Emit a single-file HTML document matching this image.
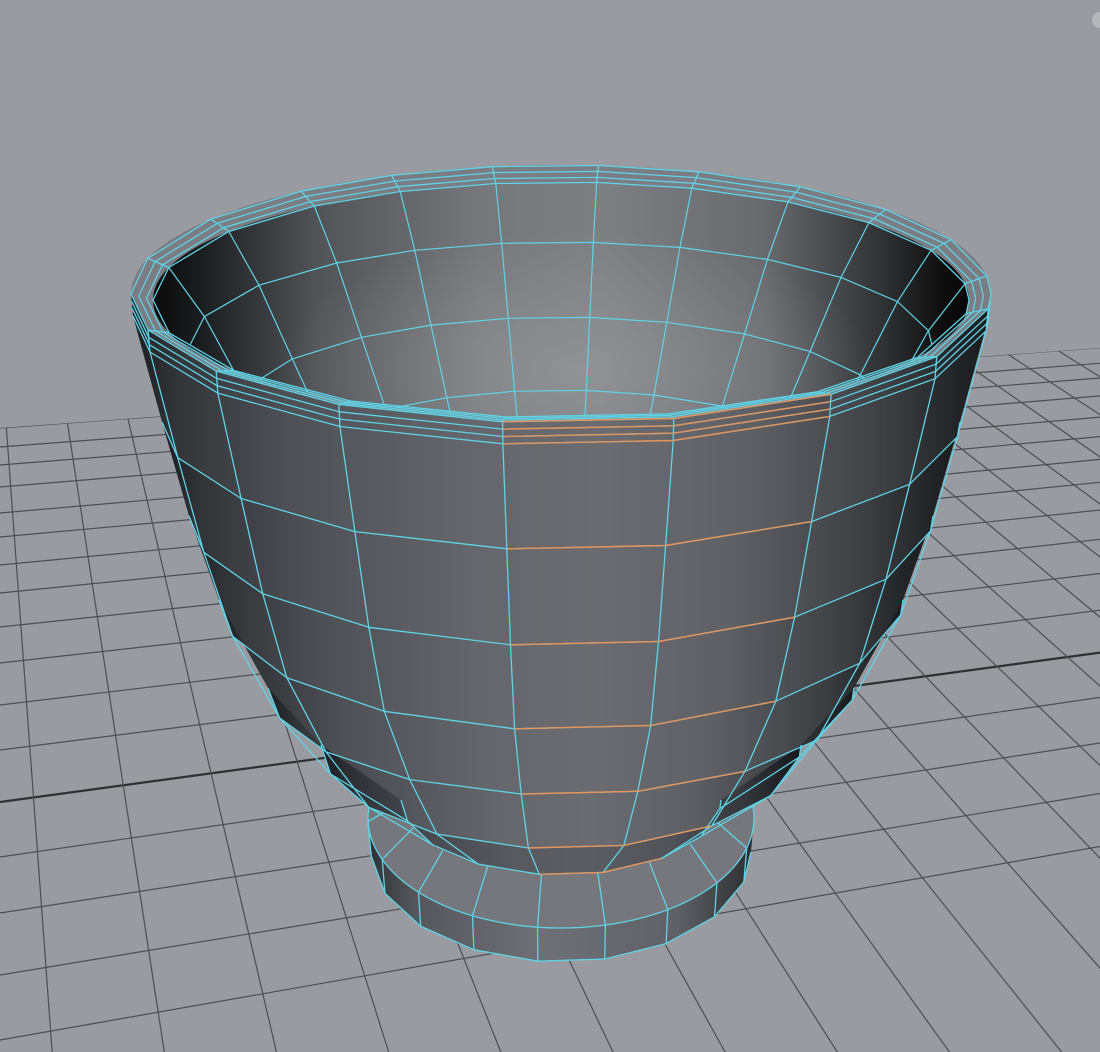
<!DOCTYPE html>
<html><head><meta charset="utf-8"><style>html,body{margin:0;padding:0;background:#9a9ba0;}svg{display:block}</style></head>
<body>
<svg id="s" width="1100" height="1052" viewBox="0 0 1100 1052" xmlns="http://www.w3.org/2000/svg"></svg>
<script>
var D=Math.PI/180;
function R(cx,cy,rx,ry){return {cx:cx,cy:cy,rx:rx,ry:ry};}
function L(a,b,t){return R(a.cx+(b.cx-a.cx)*t,a.cy+(b.cy-a.cy)*t,a.rx+(b.rx-a.rx)*t,a.ry+(b.ry-a.ry)*t);}
function P(r,t){return [r.cx+r.rx*Math.cos(t*D), r.cy+r.ry*Math.sin(t*D)];}
function S(p){return p.map(function(q){return q[0].toFixed(1)+','+q[1].toFixed(1);}).join(' ');}
function arc(r,ang){return ang.map(function(t){return P(r,t);});}
var o='';
o+='<defs>';
o+='<clipPath id="gc"><polygon points="0,428 1100,348 1100,1052 0,1052"/></clipPath>';
o+='<linearGradient id="bd" x1="0" x2="1" y1="0" y2="0"><stop offset="0" stop-color="#1d1e20"/><stop offset=".05" stop-color="#323438"/><stop offset=".18" stop-color="#4e5055"/><stop offset=".4" stop-color="#65676c"/><stop offset=".55" stop-color="#6a6c71"/><stop offset=".72" stop-color="#5e6065"/><stop offset=".88" stop-color="#3d3f43"/><stop offset=".96" stop-color="#242528"/><stop offset="1" stop-color="#1a1b1d"/></linearGradient>';
o+='<linearGradient id="ft" x1="0" x2="1" y1="0" y2="0"><stop offset="0" stop-color="#2e2f32"/><stop offset=".12" stop-color="#55575c"/><stop offset=".45" stop-color="#6e7075"/><stop offset=".8" stop-color="#5f6166"/><stop offset="1" stop-color="#2c2d30"/></linearGradient>';
o+='<linearGradient id="op" x1="0" x2="1" y1="0" y2="0"><stop offset="0" stop-color="#0a0a0a"/><stop offset=".06" stop-color="#1c1d1f"/><stop offset=".2" stop-color="#515357"/><stop offset=".4" stop-color="#75777b"/><stop offset=".55" stop-color="#7d7f83"/><stop offset=".75" stop-color="#686a6e"/><stop offset=".9" stop-color="#2e2f31"/><stop offset=".97" stop-color="#0d0d0d"/><stop offset="1" stop-color="#080808"/></linearGradient>';
o+='<radialGradient id="fl" cx=".5" cy=".5" r=".5"><stop offset="0" stop-color="#a0a2a6" stop-opacity=".55"/><stop offset="1" stop-color="#a0a2a6" stop-opacity="0"/></radialGradient>';
var R0i=R(561,300,408,118);
o+='<clipPath id="oc"><ellipse cx="561" cy="300" rx="408" ry="118"/></clipPath>';
o+='</defs>';
o+='<rect width="1100" height="1052" fill="#9a9ba0"/>';
o+='<circle cx="1100" cy="20" r="8" fill="#c8c9cc" opacity=".6"/>';
o+='<g clip-path="url(#gc)" stroke="#4d4e51" stroke-width="1.2" fill="none">';
var hy=[428,447,465,487,513,537,565,593,627,663,705,750,802,857,913,975,1040];
hy.forEach(function(y){var y2=y+(-5-y)*1100/5940;o+='<line x1="0" y1="'+y+'" x2="1100" y2="'+y2.toFixed(1)+'"'+(y==802?' stroke="#2f3032" stroke-width="2.2"':'')+'/>';});
for(var k=-2;k<24;k++){var xb=52+112*k;var t=(1100+340)/(1050+340);var x2=-50+(xb+50)*t;o+='<line x1="-50" y1="-340" x2="'+x2.toFixed(1)+'" y2="1100"/>';}
o+='</g>';
var Ft=R(561,818,193,110),Fb=R(561,852,190,110),Fi=R(561,800,160,75);
var fa=[15.8,36.1,56.4,76.7,97,117.3,137.6,157.9,178.2];
var fr=[0].concat(fa).concat([180]);
var side=arc(Ft,fr).concat(arc(Fb,fr.slice().reverse()));
o+='<polygon points="'+S(side)+'" fill="url(#ft)"/>';
o+='<ellipse cx="561" cy="818" rx="193" ry="110" fill="#75777c"/>';
o+='<g stroke="#5fd3e6" stroke-width="1.3" fill="none">';
o+='<ellipse cx="561" cy="818" rx="193" ry="110"/>';
o+='<polyline points="'+S(arc(Fb,fr))+'"/>';
fa.forEach(function(t){o+='<polyline points="'+S([P(Ft,t),P(Fb,t)])+'"/>';o+='<polyline points="'+S([P(Ft,t),P(Fi,t)])+'"/>';});
o+='</g>';
var R0=R(561,294,430,129),R1=R(561,316,428,129);
var R0a=L(R0,R0i,.35),R0b=L(R0,R0i,.7),Rb1=L(R0,R1,1/3),Rb2=L(R0,R1,2/3);
var R2=R(561,422,399,128),R3=R(561,516,372,130),R4=R(561,600,342,130),R5=R(561,688,293,107),R6=R(561,745,240,104),R7=R(561,800,160,75);
var front=[6.6,29.1,51.1,74.8,97.8,121.1,143.3,163.8];
var fx=[0].concat(front).concat([180]);
var back=[196,215.5,232.8,246.8,260.8,275,288.7,303.8,319,335.1,352];
var all=[0].concat(front).concat([180]).concat(back);
o+='<ellipse cx="561" cy="294" rx="430" ry="129" fill="#7b7d82"/>';
o+='<ellipse cx="561" cy="300" rx="408" ry="118" fill="url(#op)"/>';
o+='<ellipse cx="575" cy="370" rx="300" ry="140" fill="url(#fl)" clip-path="url(#oc)"/>';
var I1=R(561,345,371,103),I2=R(561,417,330,100),I3=R(561,485,290,95),I4=R(561,560,240,85);
var ba=[180].concat(back).concat([360]);
o+='<g clip-path="url(#oc)" stroke="#5fd3e6" stroke-width="1.2" fill="none">';
[I1,I2,I3].forEach(function(r){o+='<polyline points="'+S(arc(r,ba))+'"/>';});
back.forEach(function(t){o+='<polyline points="'+S([P(R0i,t),P(I1,t),P(I2,t),P(I3,t),P(I4,t)])+'"/>';});
o+='</g>';
var rings=[R0,R1,R2,R3,R4,R5,R6,R7];
for(var i=0;i<rings.length-1;i++){var a=rings[i],b=rings[i+1];var poly=arc(a,fx).concat(arc(b,fx.slice().reverse()));o+='<polygon points="'+S(poly)+'" fill="url(#bd)"/>';}
var bot=arc(R6,fx).concat(arc(R7,fx.slice().reverse()));
o+='<polygon points="'+S(bot)+'" fill="#101012" opacity=".15"/>';
o+='<g stroke="#5fd3e6" stroke-width="1.3" fill="none" stroke-linejoin="round">';
var allS=all.slice().sort(function(x,y){return x-y;});allS.push(allS[0]+360);
[R0,R0a,R0b,R0i].forEach(function(r){o+='<polyline points="'+S(arc(r,allS))+'"/>';});
[Rb1,Rb2,R1,R2,R3,R4,R5,R6,R7].forEach(function(r){o+='<polyline points="'+S(arc(r,fx))+'"/>';});
front.forEach(function(t){o+='<polyline points="'+S([P(R0i,t),P(R0,t),P(Rb1,t),P(Rb2,t),P(R1,t),P(R2,t),P(R3,t),P(R4,t),P(R5,t),P(R6,t),P(R7,t)])+'"/>';});
back.forEach(function(t){o+='<polyline points="'+S([P(R0,t),P(R0i,t)])+'"/>';});
o+='</g>';
o+='<g stroke="#e8935a" stroke-width="1.4" fill="none">';
var oa=[97.8,74.8,51.1];
[R0,Rb1,Rb2,R1,R2,R3,R4,R5,R6,R7].forEach(function(r){o+='<polyline points="'+S(arc(r,oa))+'"/>';});
o+='</g>';
document.getElementById('s').innerHTML=o;
</script>
</body></html>
